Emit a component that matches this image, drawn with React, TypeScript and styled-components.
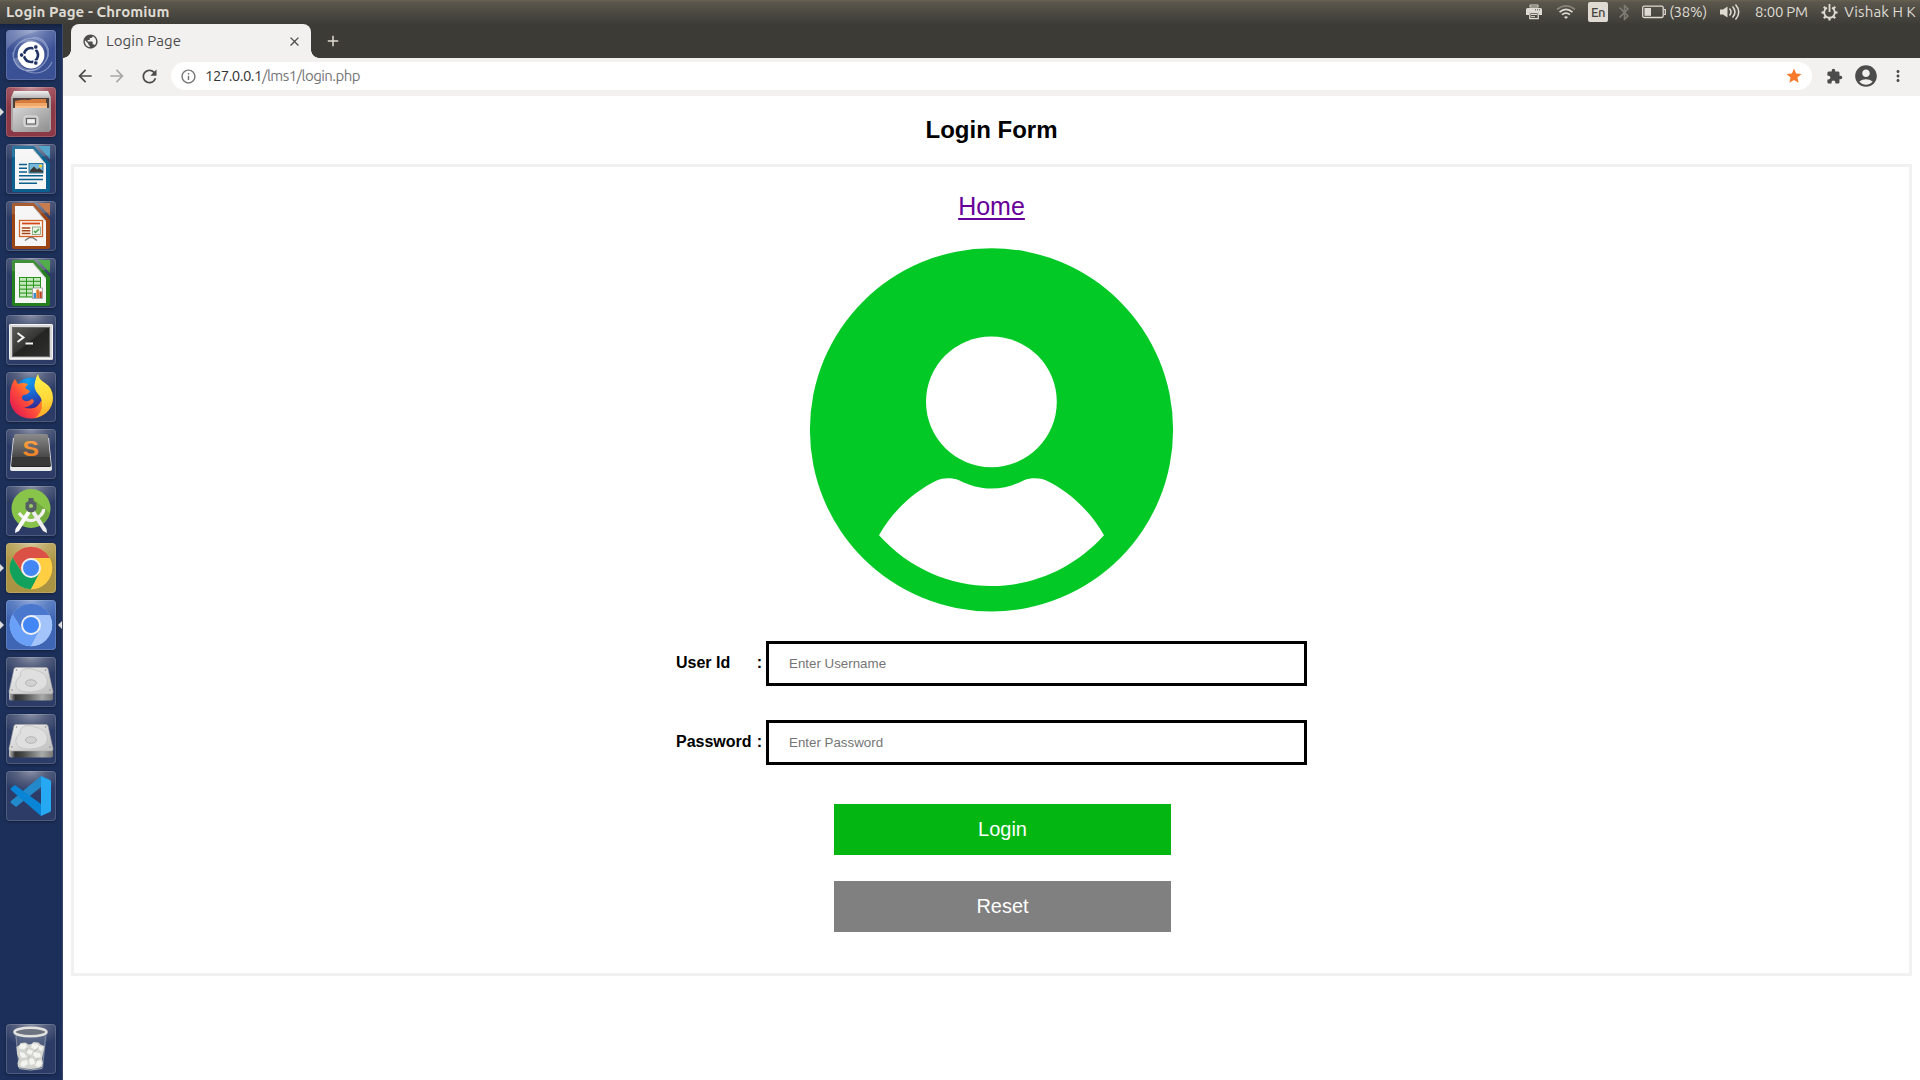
import React from "react";
import styled, { createGlobalStyle, css } from "styled-components";
import {
  MdArrowBack,
  MdArrowForward,
  MdRefresh,
  MdInfoOutline,
  MdPublic,
  MdClose,
  MdAdd,
  MdStar,
  MdExtension,
  MdAccountCircle,
  MdMoreVert,
  MdBluetooth,
} from "react-icons/md";

const GlobalStyle = createGlobalStyle`
  * { box-sizing: border-box; }
  body { margin: 0; background: #fff; overflow: hidden; }
  svg { display: block; flex: none; }
`;

const uiFont = `Ubuntu, "Noto Sans", "Open Sans", sans-serif`;
const pageFont = `"Liberation Sans", Arial, Helvetica, sans-serif`;

/* ---------- Desktop shell ---------- */

const Desktop = styled.div`
  width: 1920px;
  height: 1080px;
  display: flex;
  flex-direction: column;
  background: #fff;
`;

const TopPanel = styled.header`
  height: 24px;
  flex: none;
  display: flex;
  align-items: center;
  justify-content: space-between;
  padding: 0 4px 0 6px;
  background: linear-gradient(#67624f 0, #5b574d 2px, #4d4a43 12px, #3d3c37 24px);
  color: #dfdbd2;
  font-family: ${uiFont};
  white-space: nowrap;
`;

const WindowTitle = styled.div`
  font-size: 15px;
  font-weight: 700;
  line-height: 24px;
  letter-spacing: 0.08px;
`;

const Indicators = styled.div`
  display: flex;
  align-items: center;
  height: 24px;
`;

const Indicator = styled.div<{ $w: number; $gap?: number; $track?: number }>`
  width: ${(p) => p.$w}px;
  margin-left: ${(p) => p.$gap ?? 0}px;
  height: 24px;
  display: flex;
  align-items: center;
  justify-content: center;
  font-size: 15px;
  line-height: 24px;
  letter-spacing: ${(p) => p.$track ?? 0}px;
`;

const LanguageBadge = styled.div`
  width: 20px;
  height: 20px;
  margin-left: 12px;
  border-radius: 2px;
  background: #dfdbd2;
  color: #45433d;
  font-size: 13px;
  font-weight: 500;
  line-height: 20px;
  letter-spacing: -0.5px;
  text-align: center;
`;

const Workspace = styled.div`
  flex: 1;
  display: flex;
  min-height: 0;
`;

/* ---------- Launcher ---------- */

const LauncherBar = styled.nav`
  width: 63px;
  flex: none;
  display: flex;
  flex-direction: column;
  gap: 7px;
  padding: 6px 0 6px 6px;
  background: linear-gradient(#14213f 0, #1b2d57 6px, #1d3059 40px, #1c2f5a 100%);
  border-right: 1px solid #3a4a67;
`;

const Tile = styled.div<{ $bg?: string; $last?: boolean }>`
  position: relative;
  width: 50px;
  height: 50px;
  flex: none;
  border-radius: 4px;
  background: ${(p) =>
    p.$bg
      ? p.$bg
      : "radial-gradient(ellipse 34px 22px at 50% 0, #8990a6 0, #56607f 45%, #2c3c66 100%)"};
  box-shadow:
    inset 0 0 0 1px rgba(255, 255, 255, 0.16),
    0 1px 3px rgba(0, 0, 0, 0.35);
  ${(p) =>
    p.$last &&
    css`
      margin-top: auto;
    `}
`;

const RunningArrow = styled.i<{ $side: "left" | "right" }>`
  position: absolute;
  top: 21px;
  width: 0;
  height: 0;
  border-top: 4px solid transparent;
  border-bottom: 4px solid transparent;
  ${(p) =>
    p.$side === "left"
      ? css`
          left: -6px;
          border-left: 4px solid #dcdcdc;
        `
      : css`
          right: -6px;
          border-right: 4px solid #dcdcdc;
        `}
`;

const TileSvg = ({ children }: { children: React.ReactNode }) => (
  <svg width="50" height="50" viewBox="0 0 50 50">
    {children}
  </svg>
);

const DashIcon = () => (
  <TileSvg>
    <g fill="none" stroke="#b9c5e6" strokeWidth="1.2" opacity=".55">
      <path d="M8 31C5 16 17 6 30 9c9 2 13 10 12 18" />
      <path d="M24 9C36 3 47 18 40 31" />
      <path d="M42 18c2 15-11 25-24 22C9 37 7 28 7 22" />
      <path d="M20 41c12 5 22 0 26-9" />
    </g>
    <path d="M2 18C9 8 24 3 33 1H4Q1 1 1 4v16z" fill="#fff" opacity=".17" />
    <path d="M13 14C22 5 38 11 39 25c-2-7-8-12-14-13-5 0-9 0-12 2z" fill="#fff" opacity=".25" />
    <path d="M12 27c0 11 11 16 24 10-8 8-26 5-28-8z" fill="#fff" opacity=".25" />
    <circle cx="25" cy="25" r="13.4" fill="#fff" />
    <circle
      cx="25"
      cy="25"
      r="7"
      fill="none"
      stroke="#203364"
      strokeWidth="2.6"
      strokeDasharray="12.66 2"
      strokeDashoffset="-1"
      transform="rotate(60 25 25)"
    />
    <g fill="#203364" stroke="#fff" strokeWidth=".9">
      <circle cx="15.6" cy="25" r="2.3" />
      <circle cx="29.8" cy="17" r="2.3" />
      <circle cx="29.8" cy="33" r="2.3" />
    </g>
  </TileSvg>
);

const FilesIcon = () => (
  <TileSvg>
    <defs>
      <linearGradient id="cab" x1="0" y1="0" x2="1" y2="1">
        <stop offset="0" stopColor="#d4d4d4" />
        <stop offset="1" stopColor="#8e8e8e" />
      </linearGradient>
      <linearGradient id="cabTop" x1="0" y1="0" x2="0" y2="1">
        <stop offset="0" stopColor="#f1f0f0" />
        <stop offset="1" stopColor="#b8b4b4" />
      </linearGradient>
    </defs>
    <path d="M8 4h34l3 7v31q0 2-2 2H7q-2 0-2-2V11z" fill="#aaa6a6" />
    <path d="M8 4h34l3 7H5z" fill="url(#cabTop)" />
    <path d="M7 11h36v11H7z" fill="#4b403d" />
    <path d="M9 14q8-2 14-1l3-1h14v9H9z" fill="#d77a3e" />
    <path d="M9 16h32v6H9z" fill="#efa76a" />
    <path d="M9 19h32v3H9z" fill="#f8c08c" />
    <path d="M7 21h36.5v24H7z" fill="url(#cab)" />
    <rect x="18" y="29" width="14" height="10.5" rx="2" fill="#c9c9c9" stroke="#dedede" />
    <rect x="20.5" y="31.5" width="9" height="5.5" fill="#f0f0f0" stroke="#666" strokeWidth="1.2" />
  </TileSvg>
);

const DocumentBase = ({ color, corner }: { color: string; corner: string }) => (
  <>
    <path d="M8 2h20l16 17v27q0 2-2 2H8q-2 0-2-2V4q0-2 2-2z" fill={color} />
    <path d="M32 2h12v13z" fill={corner} />
    <path d="M9 5h18l13 15v25H9z" fill="#f5f5f5" />
    <path d="M27 5v1l13 15v-1z" fill="#bbb" />
    <path d="M6 2h38v9Q24 16 6 13z" fill="#fff" opacity=".13" />
  </>
);

const WriterIcon = () => (
  <TileSvg>
    <DocumentBase color="#0a6190" corner="#3c96c0" />
    <g stroke="#0b5f8d" strokeWidth="1.5">
      <path d="M13 20.5h8M13 24.2h8M13 28h8M13 31.7h24M13 35.5h24M13 39.2h18" />
    </g>
    <rect x="23" y="19.5" width="14" height="9.5" fill="#78b9da" stroke="#0b5f8d" strokeWidth=".8" />
    <circle cx="34.5" cy="22" r="1.6" fill="#f5d22c" />
    <path d="M24 28.5v-2l4-4 3 3 2-1.5 4 3v1.5z" fill="#3b3b38" />
  </TileSvg>
);

const ImpressIcon = () => (
  <TileSvg>
    <DocumentBase color="#9c4414" corner="#c06a38" />
    <path d="M19 39.500l4.500-3h3l4.500 3" fill="none" stroke="#777" strokeWidth="1.5" />
    <rect x="13.5" y="19.5" width="23" height="16" fill="#fff6ef" stroke="#d1622a" strokeWidth="1.3" />
    <path d="M16 22.500h18" stroke="#d1491b" strokeWidth="1.8" />
    <path d="M15.800 27h8.500M15.800 29.800h8.500M15.800 32.600h8.500" stroke="#a34517" strokeWidth="1.5" />
    <rect x="26.5" y="26" width="8" height="7.500" fill="#eaf5e7" stroke="#7d997a" strokeWidth=".8" />
    <path d="M28 30l1.500 1.500L33 28" fill="none" stroke="#45a040" strokeWidth="1.4" />
  </TileSvg>
);

const CalcIcon = () => (
  <TileSvg>
    <DocumentBase color="#24801c" corner="#39a330" />
    <rect x="13" y="19" width="22" height="20.5" fill="#2b961f" />
    <g fill="#c6e8bf">
      {[0, 1, 2, 3, 4].map((r) =>
        [0, 1, 2].map((c) => (
          <rect key={`${r}${c}`} x={14 + c * 7} y={20 + r * 3.9} width="6" height="2.8" />
        ))
      )}
    </g>
    <rect x="26.5" y="30" width="10" height="10.5" fill="#fff" stroke="#999" strokeWidth=".8" />
    <path d="M27.5 35h2.500v5h-2.500z" fill="#398bd2" />
    <path d="M30.3 31.5h2.800V40h-2.800z" fill="#db7926" />
    <path d="M33.4 33.5h2.400V40h-2.400z" fill="#b84227" />
  </TileSvg>
);

const TerminalIcon = () => (
  <TileSvg>
    <defs>
      <linearGradient id="term" x1="0" y1="0" x2="1" y2="1">
        <stop offset="0" stopColor="#5a5a57" />
        <stop offset=".45" stopColor="#373735" />
        <stop offset=".5" stopColor="#242422" />
        <stop offset="1" stopColor="#303030" />
      </linearGradient>
    </defs>
    <rect x="3" y="9" width="44" height="36" rx="1.5" fill="#d7d7d7" />
    <rect x="3.5" y="9.5" width="43" height="34" rx="1" fill="none" stroke="#f5f5f5" />
    <rect x="6.5" y="12.5" width="37" height="29" fill="url(#term)" stroke="#666" />
    <path d="M11.5 18l6 4.5-6 4.5M19.5 28.5h7.5" fill="none" stroke="#f4f4f4" strokeWidth="2" />
  </TileSvg>
);

const FirefoxIcon = () => (
  <TileSvg>
    <defs>
      <linearGradient id="ffx" x1=".9" y1=".2" x2=".1" y2=".8">
        <stop offset="0" stopColor="#ffc42e" />
        <stop offset=".3" stopColor="#ff9726" />
        <stop offset=".65" stopColor="#ff4b3a" />
        <stop offset="1" stopColor="#e6204f" />
      </linearGradient>
      <radialGradient id="ffGlobe" cx=".4" cy=".1" r=".9">
        <stop offset="0" stopColor="#12a3f0" />
        <stop offset=".5" stopColor="#1b60cf" />
        <stop offset="1" stopColor="#3a2387" />
      </radialGradient>
      <linearGradient id="ffTail" x1=".4" y1="0" x2=".5" y2="1">
        <stop offset="0" stopColor="#fff14b" />
        <stop offset=".6" stopColor="#ffd838" />
        <stop offset="1" stopColor="#ffa826" />
      </linearGradient>
    </defs>
    <circle cx="25" cy="22" r="16.5" fill="url(#ffGlobe)" />
    <path
      d="M4 24Q4 13 9 7L12 12Q17 10 22 12L19 16 24 19Q22 23 17 23 15 26 17 28 21 31 26 27 29 28 27 31 22 36 17 35 30 40 35 29L46 20Q48 33 40 41 33 46.500 25 46.500 8 46 4 30Z"
      fill="url(#ffx)"
    />
    <path
      d="M32 2q1 6 7 9 8 5 8 15 0 9-7 15-5 4-11 5 8-6 7-15 0-5-4-9-5-6-3-12 1-5 3-8z"
      fill="url(#ffTail)"
    />
  </TileSvg>
);

const SublimeGlyph = styled.text`
  font-family: "Liberation Sans", sans-serif;
  font-size: 22px;
  font-weight: 700;
`;

const SublimeIcon = () => (
  <TileSvg>
    <defs>
      <linearGradient id="subKey" x1="0" y1="0" x2="0" y2="1">
        <stop offset="0" stopColor="#8b8b8b" />
        <stop offset="1" stopColor="#454545" />
      </linearGradient>
      <linearGradient id="subS" x1="0" y1="0" x2="0" y2="1">
        <stop offset="0" stopColor="#ffa94b" />
        <stop offset="1" stopColor="#ed7b1c" />
      </linearGradient>
    </defs>
    <path d="M7 9h36l3 31q0 2-2 2H6q-2 0-2-2z" fill="#e9e9e9" />
    <path d="M8 20h34l2.500 18h-39z" fill="#252525" />
    <path d="M8 7q0-2 2-2h30q2 0 2 2l2 20q0 2-2 2H8q-2 0-2-2z" fill="url(#subKey)" />
    <path d="M6 28h38l1 9H5z" fill="#373737" />
    <SublimeGlyph transform="translate(16.500 27) scale(1.120 1)" fill="url(#subS)">
      S
    </SublimeGlyph>
  </TileSvg>
);

const AndroidStudioIcon = () => (
  <TileSvg>
    <circle cx="25" cy="22.5" r="19.5" fill="#88c34a" />
    <path d="M27 13l17 14a20 20 0 01-9 12L24 27z" fill="#6ba33b" opacity=".75" />
    <path d="M13 27q11 14 22 2 3-3 2.500-6" fill="none" stroke="#f1f1f1" strokeWidth="3.200" />
    <path d="M21 25L9.500 43l-.5 4 4-2 11.500-18z" fill="#fff" />
    <path d="M29 25l11.500 18 .5 4-4-2-11.500-18z" fill="#eee" />
    <path d="M22.5 12h5v3l3 2v6l-3 3h-5l-3-3v-6l3-2z" fill="#555f63" />
    <circle cx="25" cy="20" r="2.1" fill="#98c969" />
  </TileSvg>
);

const WheelIcon = ({ top, left, right }: { top: string; left: string; right: string }) => (
  <TileSvg>
    <circle cx="25" cy="25" r="21.2" fill={right} />
    <path d="M6.600 14.400A21.200 21.200 0 0143.400 14.400L43.600 15H25L16.300 30z" fill={top} />
    <path d="M6.600 14.400A21.200 21.200 0 0025 46.200L33.700 30H16.300z" fill={left} />
    <path d="M25 15h18.600A21.200 21.200 0 0125 46.200L33.700 30z" fill={right} />
    <circle cx="25" cy="25" r="10" fill="#f1f1f1" />
    <circle cx="25" cy="25" r="8" fill="#4287f5" />
  </TileSvg>
);

const DiskIcon = () => (
  <TileSvg>
    <defs>
      <linearGradient id="disk" x1="0" y1="0" x2="1" y2="1">
        <stop offset="0" stopColor="#f0f0f0" />
        <stop offset="1" stopColor="#c0c0c0" />
      </linearGradient>
      <linearGradient id="diskEdge">
        <stop offset="0" stopColor="#c5c5c5" />
        <stop offset=".14" stopColor="#333" />
        <stop offset=".3" stopColor="#444" />
        <stop offset=".75" stopColor="#aaa" />
        <stop offset="1" stopColor="#777" />
      </linearGradient>
    </defs>
    <path d="M3 33h44v8.500q0 2-2 2H5q-2 0-2-2z" fill="url(#diskEdge)" />
    <path
      d="M10 10.500h30q1.500 0 2 1.500l5 23q0 2-2 2H5q-2 0-2-2l5-23q.5-1.500 2-1.500z"
      fill="url(#disk)"
      stroke="#a7a7a7"
      strokeWidth=".6"
    />
    <path
      d="M29 13C20 9 12 14 15 19c-8 5-8 16 8 16 12 0 20-5 18-13q-2-7-12-9z"
      fill="#dfdfdf"
      stroke="#bcbcbc"
      strokeWidth=".7"
    />
    <ellipse cx="25" cy="26" rx="5.500" ry="3.300" fill="#d2d2d2" stroke="#a9a9a9" strokeWidth=".8" />
    <g fill="#8d8d8d">
      <circle cx="10.5" cy="13" r=".8" />
      <circle cx="39.5" cy="13" r=".8" />
      <circle cx="6" cy="33" r=".8" />
      <circle cx="44" cy="33" r=".8" />
    </g>
  </TileSvg>
);

const CodeIcon = () => (
  <TileSvg>
    <path d="M35 5v11L10 36l-5-4q-1-1 0-2z" fill="#2289ca" />
    <path d="M5 19q-1-1 0-2l4-3 26 19v12z" fill="#0a84d4" />
    <path d="M35 5l9 4q1 .5 1 2v28q0 1.500-1 2l-9 4z" fill="#27a8f2" />
  </TileSvg>
);

const TrashIcon = () => (
  <TileSvg>
    <path d="M9 10h32l-4 35q-12 3-24 0z" fill="#8f9bb0" opacity=".3" />
    <ellipse cx="24.500" cy="8" rx="16" ry="4.200" fill="#6d7480" stroke="#e1e2df" strokeWidth="2.600" />
    <path d="M10 12l3 32M39.500 12l-3 32" stroke="#b4bac4" opacity=".5" />
    <path
      d="M10.500 23l3-2 1-2 5-.5 3 2 3-.5 2-2 5 .5 2 2 4 1.500-.5 4-1 4-1 5 1 4-1 4-5 1.500-6 .5-8-.5-5-1.500-.5-4 1.500-4-2-5z"
      fill="#d3d4cf"
    />
    <g fill="#f3f3ef">
      <path d="M14 20.500l5-1 2 3-3 3-5-1zM26 20l5-.500 2 3-4 3-4-2zM33 22l4 1-1 4-3-1zM14 28l4 1 3 4-5 1-2-3zM22 25l5 2-2 4-4-2zM28 28l6 1 1 4-5 1-3-3zM16 37l5-1 1 4-4 3-4-2zM24 34l4 1 1 5-5 1-1-4zM31 37l4-1 1 4-3 3-4-1z" />
    </g>
    <path d="M22 24l-2 3M31 25l-3 3M24 32l-2 3M32 34l-2 3" stroke="#b5b7b1" strokeWidth="1" />
    <path d="M13 44.500q12 3 23 0" fill="none" stroke="#9ea4ac" />
  </TileSvg>
);

type LauncherApp = {
  name: string;
  icon: React.ReactNode;
  bg?: string;
  running?: boolean;
  focused?: boolean;
};

const launcherApps: LauncherApp[] = [
  {
    name: "dash",
    icon: <DashIcon />,
    bg: "radial-gradient(ellipse 36px 24px at 50% 0, #8f9cc6, #5c6fa9 50%, #3b5195)",
  },
  {
    name: "files",
    icon: <FilesIcon />,
    bg: "radial-gradient(ellipse 36px 24px at 50% 0, #c5929b, #a65965 50%, #8c3947)",
    running: true,
  },
  { name: "writer", icon: <WriterIcon /> },
  { name: "impress", icon: <ImpressIcon /> },
  { name: "calc", icon: <CalcIcon /> },
  { name: "terminal", icon: <TerminalIcon /> },
  { name: "firefox", icon: <FirefoxIcon /> },
  { name: "sublime", icon: <SublimeIcon /> },
  { name: "studio", icon: <AndroidStudioIcon /> },
  {
    name: "chrome",
    icon: <WheelIcon top="#dc5146" left="#12a05d" right="#ffce42" />,
    bg: "radial-gradient(ellipse 36px 24px at 50% 0, #d5c79a, #bda964 50%, #aa9443)",
    running: true,
  },
  {
    name: "chromium",
    icon: <WheelIcon top="#4b78cf" left="#6ba0f8" right="#a3c4fb" />,
    bg: "radial-gradient(ellipse 36px 24px at 50% 0, #91a9d8, #5d80c3 50%, #3f66b4)",
    running: true,
    focused: true,
  },
  { name: "disk-1", icon: <DiskIcon /> },
  { name: "disk-2", icon: <DiskIcon /> },
  { name: "code", icon: <CodeIcon /> },
];

const Launcher = () => (
  <LauncherBar>
    {launcherApps.map((app) => (
      <Tile key={app.name} $bg={app.bg}>
        {app.icon}
        {app.running && <RunningArrow $side="left" />}
        {app.focused && <RunningArrow $side="right" />}
      </Tile>
    ))}
    <Tile $last>
      <TrashIcon />
    </Tile>
  </LauncherBar>
);

/* ---------- Browser chrome ---------- */

const Browser = styled.main`
  flex: 1;
  display: flex;
  flex-direction: column;
  min-width: 0;
`;

const TabStrip = styled.div`
  height: 34px;
  flex: none;
  display: flex;
  padding-left: 8px;
  background: #3c3b35;
`;

const Tab = styled.div`
  position: relative;
  width: 240px;
  height: 34px;
  display: flex;
  align-items: center;
  padding: 0 9px 0 11px;
  border-radius: 8px 8px 0 0;
  background: #f2f1f0;
  color: #4d4d4d;
  font-family: ${uiFont};
  &::before,
  &::after {
    content: "";
    position: absolute;
    bottom: 0;
    width: 8px;
    height: 8px;
  }
  &::before {
    left: -8px;
    background: radial-gradient(circle at 0 0, transparent 7.5px, #f2f1f0 8px);
  }
  &::after {
    right: -8px;
    background: radial-gradient(circle at 100% 0, transparent 7.5px, #f2f1f0 8px);
  }
`;

const TabTitle = styled.span`
  flex: 1;
  margin-left: 7px;
  font-size: 15px;
  line-height: 34px;
  letter-spacing: 0.1px;
`;

const NewTab = styled.div`
  display: flex;
  align-items: center;
  margin-left: 13px;
  color: #dfdbd2;
`;

const Toolbar = styled.div`
  height: 38px;
  flex: none;
  display: flex;
  align-items: center;
  padding: 0 0 2px 12px;
  background: #f2f1f0;
  color: #4c4c4c;
`;

const ToolButton = styled.span<{ $w?: number; $dim?: boolean }>`
  width: ${(p) => p.$w ?? 32}px;
  display: flex;
  justify-content: center;
  color: ${(p) => (p.$dim ? "#a9a8a7" : "#4c4c4c")};
`;

const AddressBar = styled.div`
  flex: 1;
  height: 28px;
  display: flex;
  align-items: center;
  padding: 0 9px;
  border-radius: 14px;
  background: #fff;
  color: #757575;
  font-family: ${uiFont};
`;

const Url = styled.span`
  flex: 1;
  margin-left: 8px;
  font-size: 15px;
  letter-spacing: -0.55px;
  line-height: 28px;
  b {
    color: #333;
    font-weight: 400;
  }
`;

/* ---------- Login page ---------- */

const Page = styled.section`
  flex: 1;
  padding: 20px 8px 0;
  font-family: ${pageFont};
  color: #000;
`;

const Heading = styled.h2`
  margin: 0 0 20px;
  font-size: 24px;
  line-height: 28px;
  text-align: center;
`;

const LoginForm = styled.form`
  height: 812px;
  display: flex;
  flex-direction: column;
  align-items: center;
  border: 3px solid #f1f1f1;
  padding-top: 25px;
`;

const HomeLink = styled.a`
  font-size: 25px;
  line-height: 28px;
  color: #660099;
  text-decoration: underline;
  text-decoration-thickness: 2px;
  text-underline-offset: 3px;
`;

const Avatar = styled.svg`
  margin-top: 28px;
  overflow: visible;
`;

const Fields = styled.div`
  display: flex;
  flex-direction: column;
  gap: 34px;
  margin-top: 29px;
`;

const Field = styled.label`
  width: 631px;
  height: 45px;
  display: flex;
  font-size: 16px;
  font-weight: 700;
  line-height: 44px;
`;

const FieldName = styled.span`
  width: 90px;
  padding-right: 4px;
  display: flex;
  justify-content: space-between;
`;

const TextInput = styled.input`
  width: 541px;
  height: 45px;
  border: 3px solid #000;
  border-radius: 0;
  padding: 0 20px;
  outline: none;
  background: #fff;
  font: 13.333px ${pageFont};
  &::placeholder {
    color: #757575;
    opacity: 1;
  }
`;

const Actions = styled.div`
  display: flex;
  flex-direction: column;
  gap: 26px;
  margin: 39px 0 0 22px;
`;

const ActionButton = styled.button<{ $color: string }>`
  width: 337px;
  height: 51px;
  border: 0;
  padding: 0;
  background: ${(p) => p.$color};
  color: #fff;
  font: 20px ${pageFont};
`;

const UserAvatar = () => (
  <Avatar width="363" height="364" viewBox="810 248 363 364">
    <circle cx="991.5" cy="429.8" r="181.6" fill="#02c925" />
    <circle cx="991.4" cy="401.8" r="65.4" fill="#fff" />
    <path
      d="M879 535.3C892 512 913 492 936.7 480.6C943 477.700 952 477.600 959 480.300C970 485.700 980 488.600 991.500 488.600C1003 488.600 1013 485.700 1024 480.300C1031 477.600 1040 477.700 1046.300 480.600C1070 492 1091 512 1104 535.300C1073.500 569 1033 586 991.500 586S909.500 569 879 535.300Z"
      fill="#fff"
    />
  </Avatar>
);

const StatusIndicators = () => (
  <Indicators>
    <Indicator $w={16}>
      <svg width="16" height="16" viewBox="0 0 16 16">
        <path
          d="M3.500 3.500V1.500q0-1 1-1h7q1 0 1 1v2M1.500 4h13q1.500 0 1.500 1.500V11h-3V8H3v3H0V5.500Q0 4 1.500 4z"
          fill="#dfdbd2"
        />
        <path d="M4.500 2h7M9 5.800h1M11 5.800h1M13 5.800h1" stroke="#4d4a43" strokeWidth="1" />
        <path d="M3.800 8.500h8.400v6.200H3.800z" fill="#4d4a43" stroke="#dfdbd2" strokeWidth="1.3" />
        <path d="M5 10.500h6M5 12.700h4" stroke="#dfdbd2" />
      </svg>
    </Indicator>
    <Indicator $w={20} $gap={14}>
      <svg width="20" height="16" viewBox="0 0 20 16" fill="none" strokeWidth="1.7">
        <path d="M1 5.500Q10-1.800 19 5.500" stroke="#88847b" />
        <path d="M3.500 8.200Q10 2.700 16.500 8.200M6 10.700q4-3.200 8 0" stroke="#dfdbd2" />
        <path d="M8 13q2-1.600 4 0l-2 2z" fill="#dfdbd2" />
      </svg>
    </Indicator>
    <LanguageBadge>En</LanguageBadge>
    <Indicator $w={12} $gap={10}>
      <MdBluetooth size={19} color="#7e7b73" />
    </Indicator>
    <Indicator $w={24} $gap={12}>
      <svg width="24" height="14" viewBox="0 0 24 14">
        <rect x=".7" y="1.2" width="20.5" height="11.3" rx="1.5" fill="none" stroke="#dfdbd2" strokeWidth="1.3" />
        <rect x="2.5" y="3" width="6.5" height="7.8" fill="#dfdbd2" />
        <path d="M22 4.500h1.300v5H22" fill="none" stroke="#dfdbd2" strokeWidth="1.2" />
      </svg>
    </Indicator>
    <Indicator $w={38} $gap={3} $track={-0.25}>
      (38%)
    </Indicator>
    <Indicator $w={20} $gap={13}>
      <svg width="20" height="18" viewBox="0 0 20 18">
        <path d="M0 6.500h3l4.500-3v11l-4.500-3H0z" fill="#dfdbd2" />
        <g fill="none" stroke="#dfdbd2" strokeWidth="1.5">
          <path d="M9.500 5.500q3 3.500 0 7" />
          <path d="M12.500 3.500q5 5.500 0 11" />
          <path d="M15.500 1.500q6.500 7.500 0 15" />
        </g>
      </svg>
    </Indicator>
    <Indicator $w={53} $gap={15} $track={-0.25}>
      8:00 PM
    </Indicator>
    <Indicator $w={17} $gap={13}>
      <svg width="17" height="17" viewBox="0 0 17 17">
        <g stroke="#dfdbd2" strokeWidth="2.2">
          {[45, 90, 135, 180, 225, 270, 315].map((a) => (
            <path key={a} d="M8.500 .5v3" transform={`rotate(${a} 8.5 8.5)`} />
          ))}
        </g>
        <path d="M6 3.800a5.300 5.300 0 105 0" fill="none" stroke="#dfdbd2" strokeWidth="1.8" />
        <path d="M8.500 0v8" stroke="#dfdbd2" strokeWidth="1.8" />
      </svg>
    </Indicator>
    <Indicator $w={72} $gap={6} $track={0.1}>
      Vishak H K
    </Indicator>
  </Indicators>
);

export default function App() {
  return (
    <Desktop>
      <GlobalStyle />
      <TopPanel>
        <WindowTitle>Login Page - Chromium</WindowTitle>
        <StatusIndicators />
      </TopPanel>
      <Workspace>
        <Launcher />
        <Browser>
          <TabStrip>
            <Tab>
              <MdPublic size={17} />
              <TabTitle>Login Page</TabTitle>
              <MdClose size={15} />
            </Tab>
            <NewTab>
              <MdAdd size={18} />
            </NewTab>
          </TabStrip>
          <Toolbar>
            <ToolButton $w={20}>
              <MdArrowBack size={20} />
            </ToolButton>
            <ToolButton $w={44} $dim>
              <MdArrowForward size={20} />
            </ToolButton>
            <ToolButton $w={20}>
              <MdRefresh size={21} />
            </ToolButton>
            <ToolButton $w={12} />
            <AddressBar>
              <MdInfoOutline size={17} />
              <Url>
                <b>127.0.0.1</b>/lms1/login.php
              </Url>
              <MdStar size={18} color="#f77929" />
            </AddressBar>
            <ToolButton $w={44}>
              <MdExtension size={17} />
            </ToolButton>
            <ToolButton $w={20}>
              <MdAccountCircle size={26} />
            </ToolButton>
            <ToolButton $w={44}>
              <MdMoreVert size={18} />
            </ToolButton>
          </Toolbar>
          <Page>
            <Heading>Login Form</Heading>
            <LoginForm onSubmit={(e) => e.preventDefault()}>
              <HomeLink href="#">Home</HomeLink>
              <UserAvatar />
              <Fields>
                <Field>
                  <FieldName>
                    <span>User Id</span>
                    <span>:</span>
                  </FieldName>
                  <TextInput type="text" placeholder="Enter Username" />
                </Field>
                <Field>
                  <FieldName>
                    <span>Password</span>
                    <span>:</span>
                  </FieldName>
                  <TextInput type="password" placeholder="Enter Password" />
                </Field>
              </Fields>
              <Actions>
                <ActionButton $color="#04b612" type="submit">
                  Login
                </ActionButton>
                <ActionButton $color="#808080" type="reset">
                  Reset
                </ActionButton>
              </Actions>
            </LoginForm>
          </Page>
        </Browser>
      </Workspace>
    </Desktop>
  );
}
